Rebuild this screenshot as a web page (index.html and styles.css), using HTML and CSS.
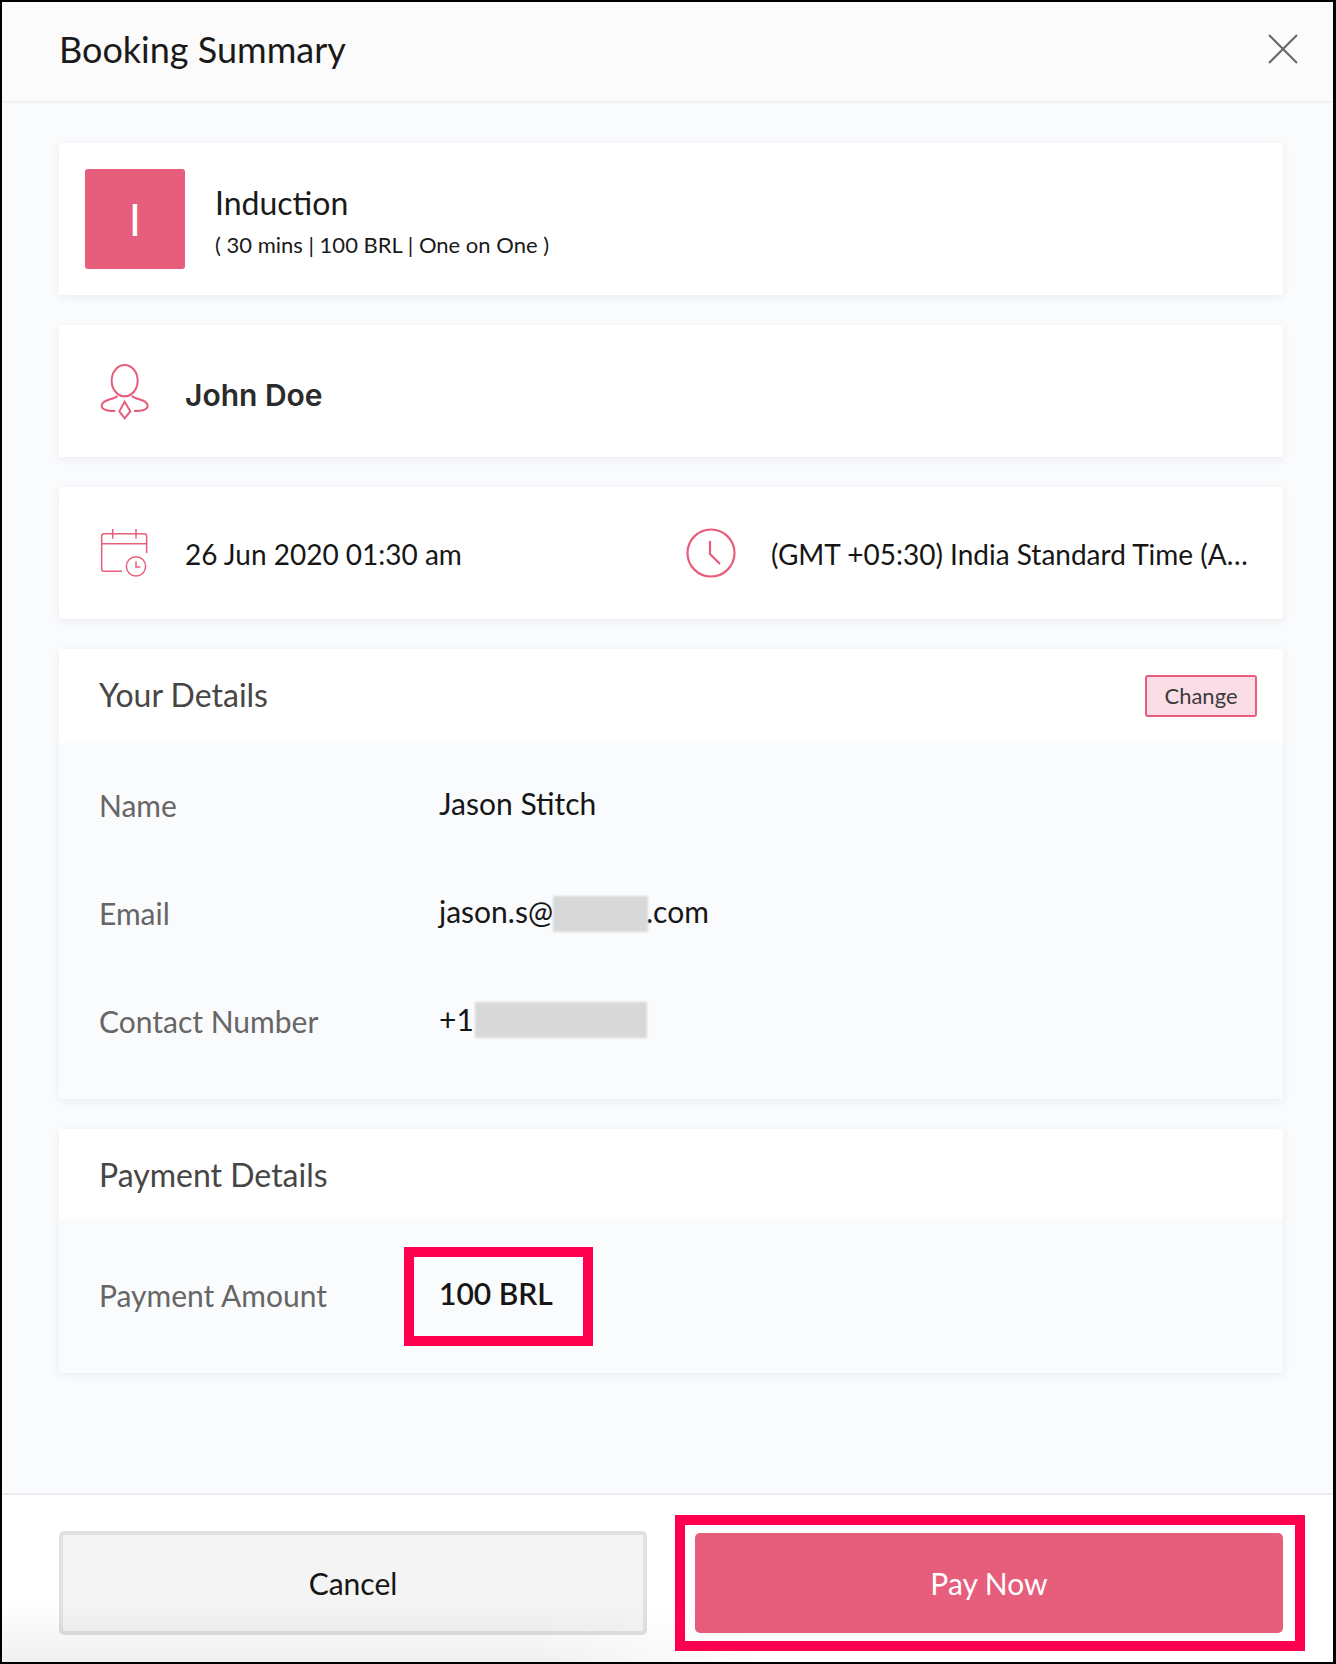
FILE: index.html
```html
<!DOCTYPE html>
<html lang="en">
<head>
<meta charset="utf-8">
<title>Booking Summary</title>
<link rel="stylesheet" href="styles.css">
</head>
<body>
<div class="frame">
  <header class="top">
    <h1 class="title">Booking Summary</h1>
    <svg class="close" width="30" height="30" viewBox="0 0 30 30"><path d="M1 1 29 29M29 1 1 29"/></svg>
  </header>
  <main class="content">
    <section class="card service">
      <div class="avatar">I</div>
      <div class="service-text">
        <div class="service-name">Induction</div>
        <div class="service-meta">( 30 mins | 100 BRL | One on One )</div>
      </div>
    </section>
    <section class="card row-card">
      <svg class="icon icon-person" width="50" height="56" viewBox="120 70 150 168"><ellipse cx="194" cy="120" rx="39" ry="47"/><path d="M172 166C160 178 125 176 125 195 125 208 150 211 166 211M216 166C228 178 263 176 263 195 263 208 238 211 222 211M194 183 211 212 194 233 178 212Z"/></svg>
      <div class="staff">John Doe</div>
    </section>
    <section class="card row-card time-card">
      <div class="time-cell date-cell">
        <svg class="icon icon-thin" width="50" height="50" viewBox="120 565 150 150"><path d="M260 640V590Q260 582 252 582H133Q125 582 125 590V687Q125 695 133 695H186M125 612H260M158 568V597M228 568V597"/><circle cx="228" cy="680" r="29"/><path d="M228 665V682H241"/></svg>
        <span class="time-text">26 Jun 2020 01:30 am</span>
      </div>
      <div class="time-cell zone-cell">
        <svg class="icon icon-clock" width="50" height="50" viewBox="0 0 50 50"><circle cx="25" cy="25" r="23.500"/><path d="M24 13V26L34 36"/></svg>
        <span class="time-text zone-text">(GMT +05:30) India Standard Time (Asia/Kolkata)</span>
      </div>
    </section>
    <section class="card details">
      <div class="card-head">
        <h2 class="card-title">Your Details</h2>
        <button class="change">Change</button>
      </div>
      <div class="card-body details-body">
        <div class="field"><span class="label">Name</span><span class="value">Jason Stitch</span></div>
        <div class="field"><span class="label">Email</span><span class="value">jason.s@<span class="redact email-redact"></span>.com</span></div>
        <div class="field"><span class="label">Contact Number</span><span class="value">+1<span class="redact phone-redact"></span></span></div>
      </div>
    </section>
    <section class="card payment">
      <div class="card-head">
        <h2 class="card-title">Payment Details</h2>
      </div>
      <div class="card-body payment-body">
        <div class="field"><span class="label">Payment Amount</span><span class="value amount">100 BRL<span class="mark mark-amount"></span></span></div>
      </div>
    </section>
  </main>
  <footer class="bottom">
    <button class="btn cancel">Cancel</button>
    <button class="btn pay">Pay Now<span class="mark mark-pay"></span></button>
  </footer>
</div>
</body>
</html>
```
FILE: styles.css
```css
* { box-sizing: border-box; }
html, body { margin: 0; padding: 0; }
body { font-family: Lato, "Liberation Sans", sans-serif; color: #161616; background: #fff; }
.frame {
  width: 1336px; height: 1664px;
  border: 2px solid #000; border-right-width: 3px;
  display: flex; flex-direction: column;
  background: #fafbfd; overflow: hidden;
}
.top {
  height: 101px; flex: none;
  display: flex; align-items: center; justify-content: space-between;
  padding: 0 35px 6px 57px;
  background: #fbfbfc; border-bottom: 2px solid #f1f2f4;
}
.title { margin: 0; font-size: 36px; font-weight: 400; color: #1a1a1a; line-height: 1; }
.close { fill: none; stroke: #666; stroke-width: 2; }
.content {
  flex: 1; display: flex; flex-direction: column; gap: 30px;
  padding: 40px 50px 0 57px;
}
.card { background: #fff; box-shadow: 0 2px 8px rgba(30, 40, 60, .07); }
.service { height: 152px; display: flex; align-items: center; padding-left: 26px; gap: 30px; }
.avatar {
  width: 100px; height: 100px; border-radius: 3px;
  background: #e75d7c; color: #fff;
  display: flex; align-items: center; justify-content: center;
  font-size: 44px;
}
.service-text { padding-top: 5px; }
.service-name { font-size: 32px; line-height: 40px; color: #1a1a1a; }
.service-meta { font-size: 22px; line-height: 30px; margin-top: 7px; color: #1a1a1a; }
.row-card { height: 132px; display: flex; align-items: center; padding-left: 40px; }
.icon { fill: none; stroke: #e75d7c; stroke-width: 5; flex: none; margin-left: 1px; }
.icon-person { stroke-width: 6; margin-top: 2px; }
.icon-thin { stroke-width: 4.5; }
.icon-clock { stroke-width: 2.2; stroke-linejoin: round; }
.staff { margin-left: 35px; padding-top: 8px; font-size: 30px; font-weight: 600; font-family: Inter, "Liberation Sans", sans-serif; color: #2b2b2b; }
.time-card { padding-right: 34px; }
.time-cell { display: flex; align-items: center; min-width: 0; }
.date-cell { width: 586px; flex: none; }
.zone-cell { flex: 1; }
.time-text { margin-left: 35px; padding-top: 2px; font-size: 28px; white-space: nowrap; }
.zone-text { overflow: hidden; text-overflow: ellipsis; }
.card-head { display: flex; align-items: center; justify-content: space-between; padding: 0 26px 0 40px; background: #fff; }
.details .card-head { height: 94px; }
.payment .card-head { height: 90px; }
.card-title { margin: 0; font-size: 32px; font-weight: 400; color: #464646; }
.details .card-title { margin-bottom: 4px; }
.change {
  width: 112px; height: 42px; padding: 0 0 2px;
  font: 22px Lato, sans-serif; color: #3a3a3a;
  background: #fadde6; border: 2px solid #e75d7c; border-radius: 3px;
}
.card-body { background: #fafbfd; padding: 0 40px; }
.details-body { height: 356px; padding-top: 6px; }
.payment-body { height: 154px; padding-top: 20px; }
.field { height: 108px; display: flex; align-items: center; }
.label { width: 340px; flex: none; font-size: 30px; color: #666; position: relative; top: 2px; }
.value { font-size: 30px; color: #161616; display: flex; align-items: center; }
.redact { display: block; background: #d8d8d8; filter: blur(1px); height: 36px; }
.email-redact { width: 95px; margin: 6px -2px 0 0; }
.phone-redact { width: 172px; margin: 2px 0 0 1px; }
.amount { position: relative; font-weight: 600; }
.mark { position: absolute; border: 10px solid #ff0050; pointer-events: none; }
.mark-amount { left: -35px; top: -28px; width: 189px; height: 99px; }
.bottom {
  height: 169px; flex: none; position: relative;
  display: flex; align-items: center; gap: 48px;
  padding: 9px 50px 0 57px; background: #fff; border-top: 2px solid #e9ebef;
}
.bottom::after {
  content: ""; position: absolute; left: 0; bottom: 0; width: 760px; height: 60px; pointer-events: none;
  background: linear-gradient(to top, rgba(0, 0, 0, .06), rgba(0, 0, 0, 0));
  -webkit-mask-image: linear-gradient(to right, #000 70%, transparent);
  mask-image: linear-gradient(to right, #000 70%, transparent);
}
.btn { height: 104px; font: 30px Lato, sans-serif; border-radius: 5px; padding: 0; }
.cancel { width: 588px; background: #f4f4f4; border: 4px solid #e1e1e1; color: #161616; }
.pay { width: 588px; height: 100px; background: #e75d7c; border: 0; color: #fff; position: relative; }
.mark-pay { left: -20px; top: -18px; width: 630px; height: 136px; }
```
